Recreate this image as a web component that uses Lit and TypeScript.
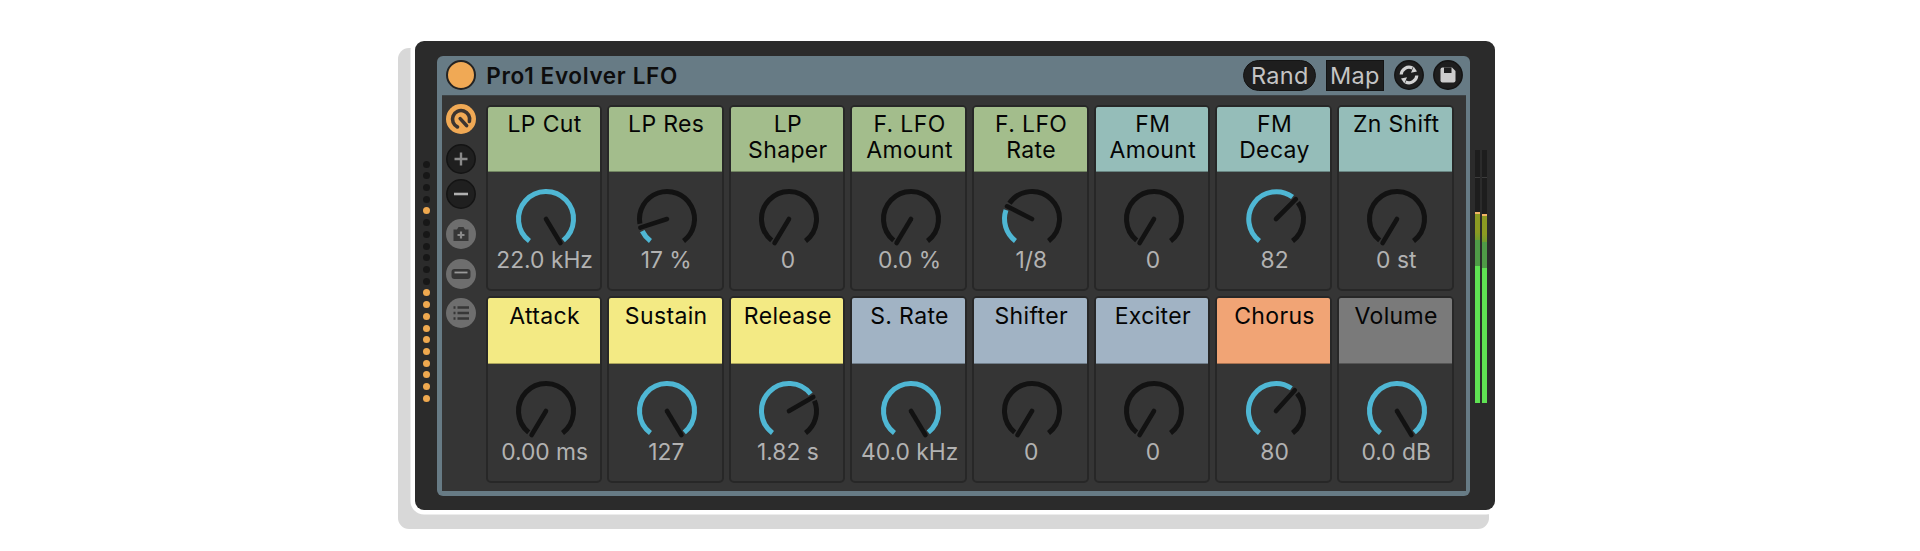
import { LitElement, html, css, svg } from "lit";
import { customElement } from "lit/decorators.js";

type Param = { name: string[]; value: string; color: string; angle: number };

const MIN = -149;
const MAX = 149;

const PARAMS: Param[] = [
  { name: ["LP Cut"], value: "22.0 kHz", color: "green", angle: MAX },
  { name: ["LP Res"], value: "17 %", color: "green", angle: -108 },
  { name: ["LP", "Shaper"], value: "0", color: "green", angle: MIN },
  { name: ["F. LFO", "Amount"], value: "0.0 %", color: "green", angle: MIN },
  { name: ["F. LFO", "Rate"], value: "1/8", color: "green", angle: -63 },
  { name: ["FM", "Amount"], value: "0", color: "teal", angle: MIN },
  { name: ["FM", "Decay"], value: "82", color: "teal", angle: 45 },
  { name: ["Zn Shift"], value: "0 st", color: "teal", angle: MIN },
  { name: ["Attack"], value: "0.00 ms", color: "yellow", angle: MIN },
  { name: ["Sustain"], value: "127", color: "yellow", angle: MAX },
  { name: ["Release"], value: "1.82 s", color: "yellow", angle: 60 },
  { name: ["S. Rate"], value: "40.0 kHz", color: "slate", angle: MAX },
  { name: ["Shifter"], value: "0", color: "slate", angle: MIN },
  { name: ["Exciter"], value: "0", color: "slate", angle: MIN },
  { name: ["Chorus"], value: "80", color: "orange", angle: 42 },
  { name: ["Volume"], value: "0.0 dB", color: "gray", angle: MAX },
];

const LIT_DOTS = new Set([4, 11, 12, 13, 14, 15, 16, 17, 18, 19, 20]);

function pt(deg: number, r: number, c = 32): string {
  const a = (deg * Math.PI) / 180;
  return `${(c + r * Math.sin(a)).toFixed(2)} ${(c - r * Math.cos(a)).toFixed(2)}`;
}

function arc(from: number, to: number, r = 27.5): string {
  const large = to - from > 180 ? 1 : 0;
  return `M ${pt(from, r)} A ${r} ${r} 0 ${large} 1 ${pt(to, r)}`;
}

function knob(angle: number) {
  const END = 143;
  const GAP = 8;
  const blueEnd = Math.min(angle - GAP, END);
  const darkStart = Math.max(angle + GAP, -END);
  return html`<svg class="knob" viewBox="0 0 64 64" width="64" height="64">
    ${blueEnd > -END ? svg`<path d=${arc(-END, blueEnd)} fill="none" stroke="#4fb7d4" stroke-width="5" />` : ""}
    ${darkStart < END ? svg`<path d=${arc(darkStart, END)} fill="none" stroke="#121212" stroke-width="5" />` : ""}
    <path d="M 32 32 L ${pt(angle, 28)}" fill="none" stroke="#121212" stroke-width="4.6" stroke-linecap="round" />
  </svg>`;
}

@customElement("app-root")
export class AppRoot extends LitElement {
  static styles = css`
    :host {
      display: block;
      position: relative;
      width: 1920px;
      height: 551px;
      overflow: hidden;
      background: #fff;
      font-family: Inter, "Liberation Sans", sans-serif;
    }
    .backdrop {
      position: absolute;
      left: 398px;
      top: 48px;
      width: 1091px;
      height: 481px;
      background: #d8d8d8;
      border-radius: 11px;
    }
    .device {
      position: absolute;
      left: 415px;
      top: 41px;
      width: 1080px;
      height: 469px;
      box-sizing: border-box;
      display: flex;
      padding-top: 14.5px;
      background: #2b2b2b;
      border-radius: 9px;
      box-shadow: 0 0 0 4.5px #fff;
    }
    .dots {
      width: 22px;
      flex: none;
      box-sizing: border-box;
      padding: 105px 0 0 7.8px;
      display: flex;
      flex-direction: column;
      gap: 4.72px;
    }
    .dot {
      width: 7px;
      height: 7px;
      border-radius: 50%;
      background: #171717;
    }
    .dot.on {
      background: #f0a94f;
    }
    .panel {
      width: 1033px;
      height: 440px;
      flex: none;
      box-sizing: border-box;
      padding: 0 4.5px 4.5px;
      background: #677b85;
      border-radius: 6px;
      display: flex;
      flex-direction: column;
    }
    .titlebar {
      height: 39.5px;
      flex: none;
      display: flex;
      align-items: center;
      box-sizing: border-box;
      padding: 0 2.2px 0 4.8px;
    }
    .power {
      width: 30px;
      height: 30px;
      box-sizing: border-box;
      border-radius: 50%;
      background: #f0a955;
      border: 2px solid #232323;
      flex: none;
    }
    .title {
      margin-left: 10px;
      font-size: 22.5px;
      font-weight: 600;
      letter-spacing: 0.65px;
      color: #0d0d0d;
      flex: 1;
    }
    .tools {
      display: flex;
      align-items: center;
      gap: 9.6px;
    }
    .rand,
    .map {
      height: 30.6px;
      box-sizing: border-box;
      display: flex;
      align-items: center;
      justify-content: center;
      color: #c4c4c4;
      font-size: 23.5px;
      font-weight: 400;
      letter-spacing: 0.3px;
      background: #1e1e1e;
      border: 1.5px solid #141414;
    }
    .rand {
      width: 72.7px;
      border-radius: 16px;
    }
    .map {
      width: 58.4px;
    }
    .round {
      width: 30px;
      height: 30px;
      flex: none;
      display: block;
    }
    .body {
      flex: 1;
      display: flex;
      min-height: 0;
      background: #353535;
      border-top: 1.5px solid #3e4447;
      box-sizing: border-box;
    }
    .side {
      width: 44px;
      flex: none;
      box-sizing: border-box;
      padding: 8.2px 0 0 4.3px;
      display: flex;
      flex-direction: column;
    }
    .side svg {
      display: block;
      flex: none;
    }
    .mt5 {
      margin-top: 5.4px;
    }
    .mt10 {
      margin-top: 9.7px;
    }
    .grid {
      width: 968.3px;
      height: 378.5px;
      margin-top: 8.5px;
      display: grid;
      grid-template-columns: repeat(8, 1fr);
      grid-template-rows: repeat(2, 1fr);
      gap: 5px;
    }
    .cell {
      box-sizing: border-box;
      border: 2px solid #272727;
      border-radius: 5px;
      background: #353535;
      display: flex;
      flex-direction: column;
      align-items: center;
      min-width: 0;
    }
    .head {
      align-self: stretch;
      height: 65.4px;
      flex: none;
      box-sizing: border-box;
      padding: 4.8px 0 0 1.4px;
      text-align: center;
      font-size: 23px;
      font-weight: 400;
      letter-spacing: 0.35px;
      line-height: 26px;
      color: #050505;
      border-radius: 2px 2px 0 0;
      border-bottom: 1px solid rgba(0, 0, 0, 0.3);
    }
    .head div {
      white-space: nowrap;
    }
    .green {
      background: #a3bd8c;
    }
    .teal {
      background: #95bdb9;
    }
    .yellow {
      background: #f3ea84;
    }
    .slate {
      background: #a1b3c4;
    }
    .orange {
      background: #f1a475;
    }
    .gray {
      background: #7a7a7a;
    }
    .knob {
      display: block;
      flex: none;
      margin: 15.3px 0 0 3.6px;
    }
    .value {
      margin: -3px 0 0 1.6px;
      font-size: 22.8px;
      line-height: 24px;
      color: #b2b2b2;
      white-space: nowrap;
    }
    .meter {
      margin: 94.5px 0 0 5px;
      width: 11.7px;
      height: 253.3px;
      flex: none;
      display: flex;
      gap: 1.7px;
    }
    .track {
      flex: 1;
      display: flex;
      flex-direction: column;
      background: #1d1d1d;
    }
    .notch {
      height: 26.5px;
      flex: none;
      border-bottom: 1.5px solid #3c3c3c;
    }
    .gapfill {
      flex: none;
    }
    .gapfill.l {
      height: 34px;
    }
    .gapfill.r {
      height: 36px;
    }
    .peak {
      height: 2.5px;
      flex: none;
      background: #f3b466;
    }
    .olive {
      height: 26px;
      flex: none;
      background: linear-gradient(#8c9a22 0 70%, #6f9c2e);
    }
    .mid {
      height: 26px;
      flex: none;
      background: #4f9a47;
    }
    .bright {
      flex: 1;
      background: #5fe253;
    }
  `;

  render() {
    return html`
      <div class="backdrop"></div>
      <div class="device">
        <div class="dots">
          ${Array.from({ length: 21 }, (_, i) => html`<div class="dot ${LIT_DOTS.has(i) ? "on" : ""}"></div>`)}
        </div>
        <div class="panel">
          <div class="titlebar">
            <div class="power"></div>
            <div class="title">Pro1 Evolver LFO</div>
            <div class="tools">
              <div class="rand">Rand</div>
              <div class="map">Map</div>
              <svg class="round" viewBox="0 0 30 30">
                <circle cx="15" cy="15" r="14.2" fill="#1e1e1e" stroke="#141414" stroke-width="1.5" />
                <path d="M7.2 14.5 A7.8 7.8 0 0 1 18.4 8" fill="none" stroke="#d2d2d2" stroke-width="3.2" />
                <path d="M17 12.8 L23 11.6 L19.6 6.4 Z" fill="#d2d2d2" />
                <path d="M22.8 15.5 A7.8 7.8 0 0 1 11.6 22" fill="none" stroke="#d2d2d2" stroke-width="3.2" />
                <path d="M13 17.2 L7 18.4 L10.4 23.6 Z" fill="#d2d2d2" />
              </svg>
              <svg class="round" viewBox="0 0 30 30">
                <circle cx="15" cy="15" r="14.2" fill="#1e1e1e" stroke="#141414" stroke-width="1.5" />
                <path d="M7.5 9.5 a2 2 0 0 1 2-2 H19 L22.5 11 V20.5 a2 2 0 0 1 -2 2 H9.5 a2 2 0 0 1 -2-2 Z" fill="#cdcdcd" />
                <rect x="11" y="7.5" width="7.5" height="5.5" fill="#1e1e1e" />
              </svg>
            </div>
          </div>
          <div class="body">
            <div class="side">
              <svg width="30" height="30" viewBox="0 0 30 30">
                <circle cx="15" cy="15" r="15" fill="#f0a955" />
                <path d="M11.5 23 A8.6 8.6 0 1 1 23.4 17.4 M14.2 14.6 L20.6 21.6" fill="none" stroke="#3b3430" stroke-width="3.6" stroke-linecap="round" />
              </svg>
              <svg class="mt10" width="30" height="30" viewBox="0 0 30 30">
                <circle cx="15" cy="15" r="14.2" fill="#1f1f1f" stroke="#141414" stroke-width="1.5" />
                <path d="M8.5 15 H21.5 M15 8.5 V21.5" stroke="#8a8a8a" stroke-width="2.4" />
              </svg>
              <svg class="mt5" width="30" height="30" viewBox="0 0 30 30">
                <circle cx="15" cy="15" r="14.2" fill="#1f1f1f" stroke="#141414" stroke-width="1.5" />
                <path d="M8 15 H22" stroke="#b0b0b0" stroke-width="2.6" />
              </svg>
              <svg class="mt10" width="30" height="30" viewBox="0 0 30 30">
                <circle cx="15" cy="15" r="15" fill="#6e6e6e" />
                <path d="M7.5 10.5 H11 L12.5 8 H17.5 L19 10.5 H22.5 V22 H7.5 Z" fill="#373737" />
                <path d="M11.5 16 H18.5 M15 12.5 V19.5" stroke="#8a8a8a" stroke-width="2.2" />
              </svg>
              <svg class="mt10" width="30" height="30" viewBox="0 0 30 30">
                <circle cx="15" cy="15" r="15" fill="#6e6e6e" />
                <rect x="5.5" y="10" width="19" height="10" rx="3" fill="#373737" />
                <path d="M8.5 13.5 H21.5" stroke="#9a9a9a" stroke-width="1.8" />
              </svg>
              <svg class="mt10" width="30" height="30" viewBox="0 0 30 30">
                <circle cx="15" cy="15" r="15" fill="#6e6e6e" />
                <path d="M11.5 9.5 H23 M11.5 15 H23 M11.5 20.5 H23" stroke="#373737" stroke-width="2.4" />
                <path d="M7.5 9.5 H9.5 M7.5 15 H9.5 M7.5 20.5 H9.5" stroke="#373737" stroke-width="2.4" />
              </svg>
            </div>
            <div class="grid">
              ${PARAMS.map(
                (p) => html`<div class="cell">
                  <div class="head ${p.color}">${p.name.map((l) => html`<div>${l}</div>`)}</div>
                  ${knob(p.angle)}
                  <div class="value">${p.value}</div>
                </div>`,
              )}
            </div>
          </div>
        </div>
        <div class="meter">
          <div class="track">
            <div class="notch"></div>
            <div class="gapfill l"></div>
            <div class="peak"></div>
            <div class="olive"></div>
            <div class="mid"></div>
            <div class="bright"></div>
          </div>
          <div class="track">
            <div class="notch"></div>
            <div class="gapfill r"></div>
            <div class="peak"></div>
            <div class="olive"></div>
            <div class="mid"></div>
            <div class="bright"></div>
          </div>
        </div>
      </div>
    `;
  }
}
